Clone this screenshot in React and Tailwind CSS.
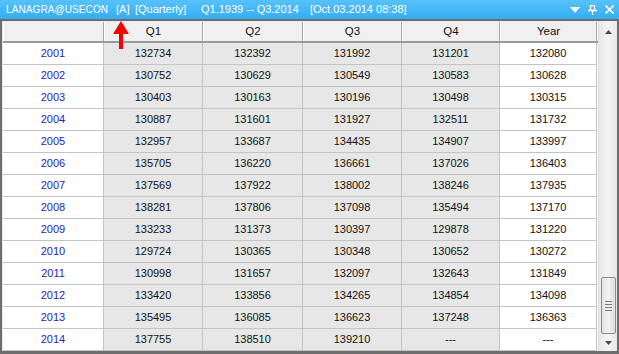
import React from "react";

const rows = [
  ["2001", "132734", "132392", "131992", "131201", "132080"],
  ["2002", "130752", "130629", "130549", "130583", "130628"],
  ["2003", "130403", "130163", "130196", "130498", "130315"],
  ["2004", "130887", "131601", "131927", "132511", "131732"],
  ["2005", "132957", "133687", "134435", "134907", "133997"],
  ["2006", "135705", "136220", "136661", "137026", "136403"],
  ["2007", "137569", "137922", "138002", "138246", "137935"],
  ["2008", "138281", "137806", "137098", "135494", "137170"],
  ["2009", "133233", "131373", "130397", "129878", "131220"],
  ["2010", "129724", "130365", "130348", "130652", "130272"],
  ["2011", "130998", "131657", "132097", "132643", "131849"],
  ["2012", "133420", "133856", "134265", "134854", "134098"],
  ["2013", "135495", "136085", "136623", "137248", "136363"],
  ["2014", "137755", "138510", "139210", "---", "---"],
];

const widths = ["w-[101px]", "w-[99px]", "w-[100px]", "w-[99px]", "w-[98px]", "w-[97px]"];
const heads = ["", "Q1", "Q2", "Q3", "Q4", "Year"];

export default function App() {
  return (
    <div className="relative w-[619px] h-[354px] overflow-hidden bg-[#f0f0f0] font-['Liberation_Sans',sans-serif] text-[11px]">
      {/* Title bar */}
      <div className="h-[19px] flex items-center bg-gradient-to-b from-[#56c2fb] to-[#33adf3] text-white text-[11px] pl-[6px] whitespace-nowrap">
        <span className="w-[110px] text-[10px] tracking-[0.1px]">LANAGRA@USECON</span>
        <span className="w-[19px]">[A]</span>
        <span className="w-[66px]">[Quarterly]</span>
        <span className="w-[109px]">Q1.1939 -- Q3.2014</span>
        <span>[Oct.03.2014 08:38]</span>
        <div className="ml-auto flex items-center gap-[8px] pr-[5px]">
          <svg width="10" height="6" viewBox="0 0 10 6">
            <path d="M0 0h10L5 6z" fill="white" />
          </svg>
          <svg width="9" height="10" viewBox="0 0 9 10">
            <path d="M2 0.5h5M2.5 0.5v5M6.5 0.5v5M0 5.5h9M4.5 5.5v4.5" stroke="white" strokeWidth="1.3" fill="none" />
          </svg>
          <svg width="9" height="9" viewBox="0 0 9 9">
            <path d="M0.5 0.5l8 8M8.5 0.5l-8 8" stroke="white" strokeWidth="1.6" />
          </svg>
        </div>
      </div>

      {/* Frame */}
      <div className="h-[335px] flex border-t-2 border-x-[2px] border-b-[3px] border-[#6e6e6e] bg-[#f4f4f4]">
        <div className="flex-1 flex flex-col border-l border-t border-[#e8e8e8] bg-white overflow-hidden">
          {/* Header */}
          <div className="flex h-[22px] border-b-2 border-[#9a9a9a]">
            {heads.map((h, i) => (
              <div
                key={i}
                className={`${widths[i]} shrink-0 flex items-center justify-center bg-[#f0f0f0] border-r border-[#a8a8a8] border-l border-l-white text-[#111] text-[11.5px]`}>
                {h}
              </div>
            ))}
          </div>
          {/* Rows */}
          {rows.map((r) => (
            <div key={r[0]} className="flex h-[22px] shrink-0">
              {r.map((v, i) => (
                <div
                  key={i}
                  className={`${widths[i]} shrink-0 flex items-center justify-center border-r border-b border-[#c4c4c4] ${
                    i === 0 ? "bg-white text-[#1d1dc4]" : i === 5 ? "bg-white text-[#111]" : "bg-[#e7e7e7] text-[#111]"
                  }`}>
                  {v}
                </div>
              ))}
            </div>
          ))}
        </div>

        {/* Scrollbar */}
        <div className="w-[19px] shrink-0 flex flex-col items-center bg-gradient-to-r from-[#e8e8e8] via-[#f4f4f4] to-[#e8e8e8] border-l border-[#dcdcdc]">
          <div className="h-[22px] flex items-center justify-center">
            <svg width="7" height="4" viewBox="0 0 7 4">
              <path d="M0 4h7L3.5 0z" fill="#4a4a4a" />
            </svg>
          </div>
          <div className="flex-1" />
          <div className="w-[15px] h-[57px] rounded-[2px] border border-[#8c8c8c] bg-gradient-to-r from-[#e2e2e2] via-[#f2f2f2] to-[#dcdcdc] flex flex-col items-center justify-center gap-[2px]">
            <div className="w-[7px] h-px bg-[#7a7a7a]" />
            <div className="w-[7px] h-px bg-[#7a7a7a]" />
            <div className="w-[7px] h-px bg-[#7a7a7a]" />
            <div className="w-[7px] h-px bg-[#7a7a7a]" />
          </div>
          <div className="h-[17px] flex items-center justify-center">
            <svg width="7" height="4" viewBox="0 0 7 4">
              <path d="M0 0h7L3.5 4z" fill="#4a4a4a" />
            </svg>
          </div>
        </div>
      </div>

      {/* Red arrow annotation */}
      <svg className="absolute left-[113px] top-[21px]" width="16" height="28" viewBox="0 0 16 28">
        <path d="M8 0L16 13H10V28H6V13H0z" fill="#f30000" />
      </svg>
    </div>
  );
}
